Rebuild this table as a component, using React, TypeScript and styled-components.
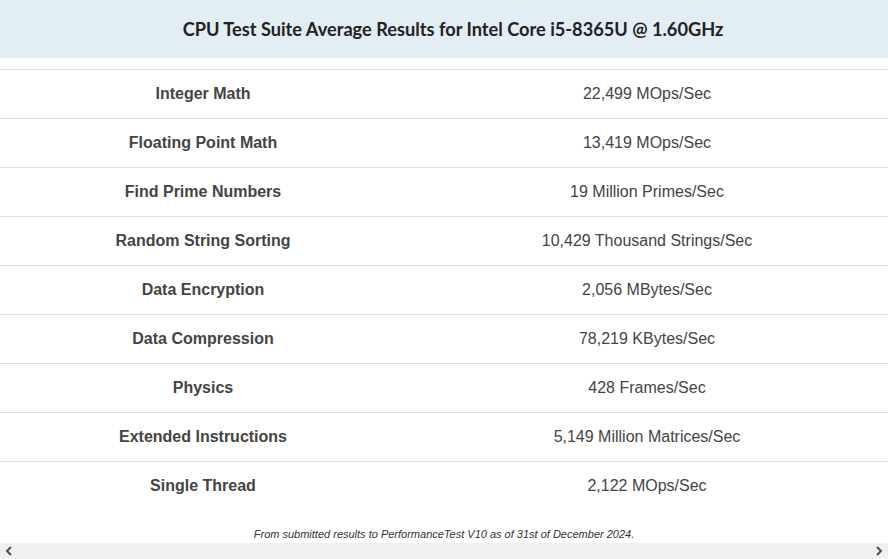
import * as React from "react"
import styled, { createGlobalStyle } from "styled-components"

const results = [
    { label: "Integer Math", value: "22,499 MOps/Sec" },
    { label: "Floating Point Math", value: "13,419 MOps/Sec" },
    { label: "Find Prime Numbers", value: "19 Million Primes/Sec" },
    { label: "Random String Sorting", value: "10,429 Thousand Strings/Sec" },
    { label: "Data Encryption", value: "2,056 MBytes/Sec" },
    { label: "Data Compression", value: "78,219 KBytes/Sec" },
    { label: "Physics", value: "428 Frames/Sec" },
    { label: "Extended Instructions", value: "5,149 Million Matrices/Sec" },
    { label: "Single Thread", value: "2,122 MOps/Sec" },
]

const App = () => {
    return (
        <Page>
            <GlobalStyle />
            <Header>
                <Title>CPU Test Suite Average Results for Intel Core i5-8365U @ 1.60GHz</Title>
            </Header>
            <Table>
                <tbody>
                    {results.map((r) => (
                        <Row key={r.label}>
                            <Label>{r.label}</Label>
                            <Value>{r.value}</Value>
                        </Row>
                    ))}
                </tbody>
            </Table>
            <Footnote>From submitted results to PerformanceTest V10 as of 31st of December 2024.</Footnote>
            <ScrollBar>
                <Arrow viewBox="0 0 8 10">
                    <path d="M6 1 L2 5 L6 9" />
                </Arrow>
                <Arrow viewBox="0 0 8 10">
                    <path d="M2 1 L6 5 L2 9" />
                </Arrow>
            </ScrollBar>
        </Page>
    )
}
export default App

const GlobalStyle = createGlobalStyle`
    body {
        margin: 0;
        background: #fff;
        font-family: "Liberation Sans", Arial, sans-serif;
    }
`;

const Page = styled.div`
    width: 888px;
    height: 559px;
    display: flex;
    flex-direction: column;
    overflow: hidden;

    & > * {
        flex-shrink: 0;
    }
`;

const Header = styled.div`
    height: 58px;
    background: #e2edf4;
    display: flex;
    align-items: center;
    justify-content: center;
    padding-left: 18px;
    margin-bottom: 11px;
`;

const Title = styled.h1`
    margin: 0;
    font-family: Lato, "Open Sans", sans-serif;
    font-size: 18.2px;
    font-weight: 700;
    color: #222;
`;

const Table = styled.table`
    width: 100%;
    border-collapse: collapse;
    table-layout: fixed;
`;

const Row = styled.tr`
    height: 49px;
    border-top: 1px solid #dedede;
`;

const Label = styled.td`
    width: 406px;
    padding: 0;
    text-align: center;
    font-size: 16px;
    font-weight: 700;
    color: #444;
`;

const Value = styled.td`
    padding: 0;
    text-align: center;
    font-size: 16px;
    color: #444;
`;

const Footnote = styled.p`
    margin: 17px 0 0;
    height: 15px;
    text-align: center;
    font-size: 11px;
    font-style: italic;
    color: #333;
`;

const ScrollBar = styled.div`
    margin-top: auto;
    height: 17px;
    background: #f0f0f0;
    display: flex;
    align-items: center;
    justify-content: space-between;
    padding: 0 5px;
`;

const Arrow = styled.svg`
    width: 8px;
    height: 10px;
    fill: none;
    stroke: #505050;
    stroke-width: 2;
`;
